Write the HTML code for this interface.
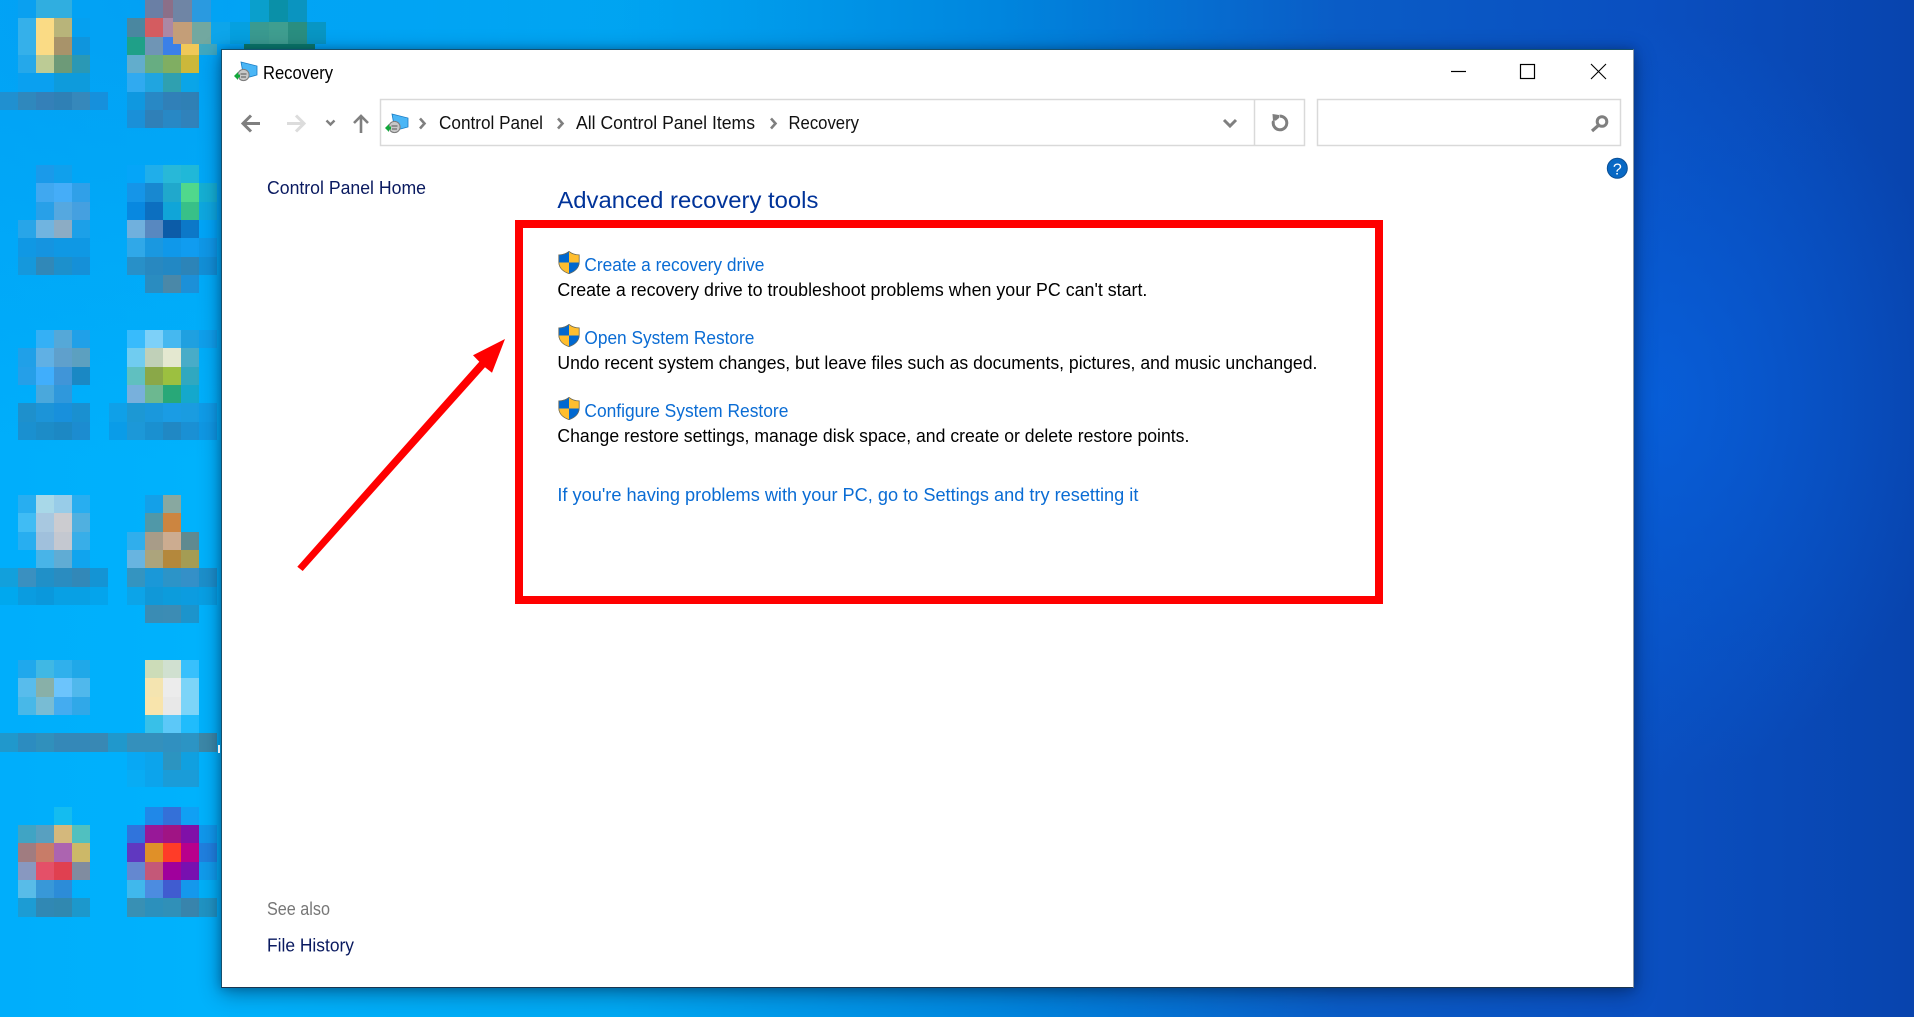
<!DOCTYPE html>
<html lang="en">
<head>
<meta charset="utf-8">
<title>Recovery</title>
<style>
html,body{margin:0;padding:0;width:1914px;height:1017px;overflow:hidden}
body{position:relative;background:
radial-gradient(ellipse 300px 380px at 1655px 400px,rgba(6,100,226,.7),rgba(6,96,216,0) 100%),
radial-gradient(ellipse 720px 460px at 150px 0,rgba(3,150,238,.6),rgba(3,150,238,0) 100%),
linear-gradient(90deg,#00aefb 0,#00b2fc 11%,#00a8f2 32%,#0086de 52%,#0a5cc6 70%,#0a4fc0 86%,#0844ae 100%)}
svg{position:absolute;left:0;top:0;display:block}
#win{position:absolute;left:221px;top:49px;width:1411px;height:937px;background:#fff;border:1px solid #14506e;border-bottom-color:#1a3550;border-right-color:#8a98a8;box-shadow:0 5px 20px rgba(0,20,50,.45),0 0 8px rgba(0,20,50,.25)}
text{font-family:"Liberation Sans",sans-serif;font-size:18px}
</style>
</head>
<body>
<svg width="1914" height="1017" viewBox="0 0 1914 1017" shape-rendering="crispEdges">
<!-- icon 1 -->
<rect x="18" y="0" width="18" height="18" fill="#0aa0f0"/><rect x="36" y="0" width="18" height="18" fill="#30aee0"/><rect x="54" y="0" width="18" height="18" fill="#30aee0"/>
<rect x="18" y="18" width="18" height="19" fill="#35b0ea"/><rect x="36" y="18" width="18" height="19" fill="#fadb85"/><rect x="54" y="18" width="18" height="19" fill="#b8b47a"/><rect x="72" y="18" width="18" height="19" fill="#05a0f0"/>
<rect x="18" y="37" width="18" height="18" fill="#35b0ea"/><rect x="36" y="37" width="18" height="18" fill="#fadb85"/><rect x="54" y="37" width="18" height="18" fill="#a8936a"/><rect x="72" y="37" width="18" height="18" fill="#0f95dd"/>
<rect x="18" y="55" width="18" height="18" fill="#25a8ea"/><rect x="36" y="55" width="18" height="18" fill="#bccb95"/><rect x="54" y="55" width="18" height="18" fill="#6d9a78"/><rect x="72" y="55" width="18" height="18" fill="#2a98b5"/>
<rect x="18" y="73" width="18" height="19" fill="#0aa0f0"/><rect x="36" y="73" width="18" height="19" fill="#0aa0f0"/><rect x="54" y="73" width="18" height="19" fill="#0e9bdc"/><rect x="72" y="73" width="18" height="19" fill="#0e9bdc"/>
<rect x="0" y="92" width="18" height="18" fill="#2090d0"/><rect x="18" y="92" width="18" height="18" fill="#2f88bd"/><rect x="36" y="92" width="18" height="18" fill="#3480b8"/><rect x="54" y="92" width="18" height="18" fill="#2f80b5"/><rect x="72" y="92" width="18" height="18" fill="#3688bb"/><rect x="90" y="92" width="18" height="18" fill="#1690dc"/>
<!-- top col B -->
<rect x="145" y="0" width="18" height="22" fill="#6a7fa5"/><rect x="163" y="0" width="10" height="22" fill="#8c6f88"/><rect x="173" y="0" width="19" height="22" fill="#6f85a5"/><rect x="192" y="0" width="19" height="22" fill="#2a9ae0"/><rect x="250" y="0" width="19" height="22" fill="#0a9fcc"/><rect x="269" y="0" width="19" height="22" fill="#0a90a8"/><rect x="288" y="0" width="19" height="22" fill="#0a94c0"/>
<rect x="127" y="18" width="18" height="19" fill="#4a87a0"/><rect x="145" y="18" width="18" height="19" fill="#d45c60"/><rect x="163" y="18" width="10" height="19" fill="#ab88a5"/>
<rect x="173" y="22" width="19" height="22" fill="#c49e78"/><rect x="192" y="22" width="19" height="22" fill="#72a8a0"/><rect x="211" y="22" width="19" height="22" fill="#0da5ea"/><rect x="230" y="22" width="20" height="22" fill="#05a0e0"/><rect x="250" y="22" width="19" height="22" fill="#3a9a90"/><rect x="269" y="22" width="19" height="22" fill="#3f9e90"/><rect x="288" y="22" width="19" height="22" fill="#2a8e80"/><rect x="307" y="22" width="19" height="22" fill="#0896c4"/>
<rect x="127" y="37" width="18" height="18" fill="#1fa088"/><rect x="145" y="37" width="18" height="18" fill="#6f95b5"/><rect x="163" y="37" width="10" height="18" fill="#3a80e8"/><rect x="173" y="44" width="8" height="11" fill="#3a80e8"/><rect x="181" y="44" width="18" height="11" fill="#f0c858"/><rect x="199" y="44" width="18" height="11" fill="#40a8c0"/>
<rect x="244" y="44" width="71" height="8" fill="#0a7a6a"/>
<rect x="127" y="55" width="18" height="18" fill="#62adcc"/><rect x="145" y="55" width="18" height="18" fill="#67ad82"/><rect x="163" y="55" width="18" height="18" fill="#80ae62"/><rect x="181" y="55" width="18" height="18" fill="#ccb83a"/>
<rect x="127" y="73" width="18" height="19" fill="#30aaf0"/><rect x="145" y="73" width="18" height="19" fill="#20a5e0"/><rect x="163" y="73" width="18" height="19" fill="#2fa0b0"/><rect x="181" y="73" width="18" height="19" fill="#0aa5e8"/>
<rect x="127" y="92" width="18" height="18" fill="#0f98e0"/><rect x="145" y="92" width="18" height="18" fill="#2888c5"/><rect x="163" y="92" width="18" height="18" fill="#3080b8"/><rect x="181" y="92" width="18" height="18" fill="#2f80b5"/>
<rect x="127" y="110" width="18" height="18" fill="#1a90d8"/><rect x="145" y="110" width="18" height="18" fill="#2f80b8"/><rect x="163" y="110" width="18" height="18" fill="#2888c5"/><rect x="181" y="110" width="18" height="18" fill="#3082bb"/>
<!-- icon 2 A -->
<rect x="36" y="165" width="18" height="18" fill="#1a9aea"/><rect x="54" y="165" width="18" height="18" fill="#10a0ec"/>
<rect x="36" y="183" width="18" height="19" fill="#40a8f0"/><rect x="54" y="183" width="18" height="19" fill="#45adf8"/><rect x="72" y="183" width="18" height="19" fill="#30a0e8"/>
<rect x="36" y="202" width="18" height="18" fill="#28a0e8"/><rect x="54" y="202" width="18" height="18" fill="#55a8e0"/><rect x="72" y="202" width="18" height="18" fill="#45a0e0"/>
<rect x="18" y="220" width="18" height="18" fill="#28a5e8"/><rect x="36" y="220" width="18" height="18" fill="#70b4e0"/><rect x="54" y="220" width="18" height="18" fill="#8cacc4"/><rect x="72" y="220" width="18" height="18" fill="#1ca0e8"/>
<rect x="18" y="238" width="18" height="19" fill="#1098e4"/><rect x="36" y="238" width="18" height="19" fill="#1594e0"/><rect x="54" y="238" width="18" height="19" fill="#0f98e4"/><rect x="72" y="238" width="18" height="19" fill="#0f98e4"/>
<rect x="18" y="257" width="18" height="18" fill="#1598dc"/><rect x="36" y="257" width="18" height="18" fill="#3088b8"/><rect x="54" y="257" width="18" height="18" fill="#1c90cc"/><rect x="72" y="257" width="18" height="18" fill="#1590d8"/>
<!-- icon 2 B -->
<rect x="127" y="165" width="18" height="18" fill="#05a5f8"/><rect x="145" y="165" width="18" height="18" fill="#20aeea"/><rect x="163" y="165" width="18" height="18" fill="#28b8d8"/><rect x="181" y="165" width="18" height="18" fill="#20b8d8"/>
<rect x="127" y="183" width="18" height="19" fill="#1595e8"/><rect x="145" y="183" width="18" height="19" fill="#1888d0"/><rect x="163" y="183" width="18" height="19" fill="#20a8cc"/><rect x="181" y="183" width="18" height="19" fill="#50d88c"/><rect x="199" y="183" width="18" height="19" fill="#15b0d4"/>
<rect x="127" y="202" width="18" height="18" fill="#0888e0"/><rect x="145" y="202" width="18" height="18" fill="#0c6fc0"/><rect x="163" y="202" width="18" height="18" fill="#10a5d8"/><rect x="181" y="202" width="18" height="18" fill="#38c088"/><rect x="199" y="202" width="18" height="18" fill="#0ea8e0"/>
<rect x="127" y="220" width="18" height="18" fill="#70b0dd"/><rect x="145" y="220" width="18" height="18" fill="#5888c0"/><rect x="163" y="220" width="18" height="18" fill="#0c5ca8"/><rect x="181" y="220" width="18" height="18" fill="#0c78c8"/><rect x="199" y="220" width="18" height="18" fill="#00a5f8"/>
<rect x="127" y="238" width="18" height="19" fill="#30a8e8"/><rect x="145" y="238" width="18" height="19" fill="#1a98e0"/><rect x="163" y="238" width="18" height="19" fill="#0f98ea"/><rect x="181" y="238" width="18" height="19" fill="#109cf0"/><rect x="199" y="238" width="18" height="19" fill="#0f98e8"/>
<rect x="127" y="257" width="18" height="18" fill="#2890c8"/><rect x="145" y="257" width="18" height="18" fill="#2888c0"/><rect x="163" y="257" width="18" height="18" fill="#2288c4"/><rect x="181" y="257" width="18" height="18" fill="#2c84b8"/><rect x="199" y="257" width="18" height="18" fill="#1290d8"/>
<rect x="145" y="275" width="18" height="18" fill="#2a8cc0"/><rect x="163" y="275" width="18" height="18" fill="#4a88a8"/><rect x="181" y="275" width="18" height="18" fill="#1c90d8"/>
<!-- icon 3 A -->
<rect x="36" y="330" width="18" height="18" fill="#35b0f5"/><rect x="54" y="330" width="18" height="18" fill="#55a8d8"/><rect x="72" y="330" width="18" height="18" fill="#20a0e8"/>
<rect x="18" y="348" width="18" height="19" fill="#20a0e8"/><rect x="36" y="348" width="18" height="19" fill="#60b0e4"/><rect x="54" y="348" width="18" height="19" fill="#5fa0cc"/><rect x="72" y="348" width="18" height="19" fill="#5ca0c0"/>
<rect x="18" y="367" width="18" height="18" fill="#259fe8"/><rect x="36" y="367" width="18" height="18" fill="#40aefc"/><rect x="54" y="367" width="18" height="18" fill="#4095d8"/><rect x="72" y="367" width="18" height="18" fill="#1a88c4"/>
<rect x="36" y="385" width="18" height="18" fill="#4aa8dc"/><rect x="54" y="385" width="18" height="18" fill="#2f98dc"/>
<rect x="18" y="403" width="18" height="19" fill="#1e90cc"/><rect x="36" y="403" width="18" height="19" fill="#1c94d8"/><rect x="54" y="403" width="18" height="19" fill="#1890dc"/><rect x="72" y="403" width="18" height="19" fill="#1a90d0"/>
<rect x="18" y="422" width="18" height="18" fill="#1a90d0"/><rect x="36" y="422" width="18" height="18" fill="#1c8cc8"/><rect x="54" y="422" width="18" height="18" fill="#1c88c4"/><rect x="72" y="422" width="18" height="18" fill="#1c8cd0"/>
<!-- icon 3 B -->
<rect x="127" y="330" width="18" height="18" fill="#38bbfc"/><rect x="145" y="330" width="18" height="18" fill="#7dd0f8"/><rect x="163" y="330" width="18" height="18" fill="#45b8f0"/><rect x="181" y="330" width="18" height="18" fill="#1fa0e0"/><rect x="199" y="330" width="18" height="18" fill="#0fa0ec"/>
<rect x="127" y="348" width="18" height="19" fill="#70ccf0"/><rect x="145" y="348" width="18" height="19" fill="#c0d0b8"/><rect x="163" y="348" width="18" height="19" fill="#e4e8d0"/><rect x="181" y="348" width="18" height="19" fill="#48acc8"/>
<rect x="127" y="367" width="18" height="18" fill="#60c0c0"/><rect x="145" y="367" width="18" height="18" fill="#8aa848"/><rect x="163" y="367" width="18" height="18" fill="#9cc040"/><rect x="181" y="367" width="18" height="18" fill="#30a8c0"/>
<rect x="127" y="385" width="18" height="18" fill="#78b0dc"/><rect x="145" y="385" width="18" height="18" fill="#6cb890"/><rect x="163" y="385" width="18" height="18" fill="#28a878"/><rect x="181" y="385" width="18" height="18" fill="#14a8cc"/>
<rect x="109" y="403" width="18" height="19" fill="#0fa0e8"/><rect x="127" y="403" width="18" height="19" fill="#1c98d4"/><rect x="145" y="403" width="18" height="19" fill="#1a98dc"/><rect x="163" y="403" width="18" height="19" fill="#1a9ce4"/><rect x="181" y="403" width="18" height="19" fill="#1a9ce0"/><rect x="199" y="403" width="18" height="19" fill="#0f9ce8"/>
<rect x="109" y="422" width="18" height="18" fill="#0a9ce8"/><rect x="127" y="422" width="18" height="18" fill="#1c98d8"/><rect x="145" y="422" width="18" height="18" fill="#1a90d0"/><rect x="163" y="422" width="18" height="18" fill="#2088c4"/><rect x="181" y="422" width="18" height="18" fill="#1a90d4"/><rect x="199" y="422" width="18" height="18" fill="#0f98e4"/>
<!-- icon 4 A -->
<rect x="18" y="495" width="18" height="18" fill="#28aef0"/><rect x="36" y="495" width="18" height="18" fill="#a8d8e8"/><rect x="54" y="495" width="18" height="18" fill="#98cce8"/><rect x="72" y="495" width="18" height="18" fill="#28aef0"/>
<rect x="18" y="513" width="18" height="19" fill="#40bcf4"/><rect x="36" y="513" width="18" height="19" fill="#a8c8e0"/><rect x="54" y="513" width="18" height="19" fill="#ccccd0"/><rect x="72" y="513" width="18" height="19" fill="#50b0e0"/>
<rect x="18" y="532" width="18" height="18" fill="#28aef0"/><rect x="36" y="532" width="18" height="18" fill="#a0c0dc"/><rect x="54" y="532" width="18" height="18" fill="#c4c8d0"/><rect x="72" y="532" width="18" height="18" fill="#38aee8"/>
<rect x="36" y="550" width="18" height="18" fill="#48b4e8"/><rect x="54" y="550" width="18" height="18" fill="#60acd4"/><rect x="72" y="550" width="18" height="18" fill="#10a4ee"/>
<rect x="0" y="568" width="18" height="19" fill="#12a0dc"/><rect x="18" y="568" width="18" height="19" fill="#3a90c0"/><rect x="36" y="568" width="18" height="19" fill="#2090c8"/><rect x="54" y="568" width="18" height="19" fill="#2a8cc0"/><rect x="72" y="568" width="18" height="19" fill="#3288b8"/><rect x="90" y="568" width="18" height="19" fill="#1494d4"/>
<rect x="0" y="587" width="18" height="18" fill="#00a8ee"/><rect x="18" y="587" width="18" height="18" fill="#0a9ce0"/><rect x="36" y="587" width="18" height="18" fill="#0a98dc"/><rect x="54" y="587" width="18" height="18" fill="#08a0e4"/><rect x="72" y="587" width="18" height="18" fill="#08a0e4"/><rect x="90" y="587" width="18" height="18" fill="#04a4ec"/>
<!-- icon 4 B -->
<rect x="145" y="495" width="18" height="18" fill="#14a0e8"/><rect x="163" y="495" width="18" height="18" fill="#88a8a0"/>
<rect x="145" y="513" width="18" height="19" fill="#5098a8"/><rect x="163" y="513" width="18" height="19" fill="#cc8540"/>
<rect x="127" y="532" width="18" height="18" fill="#30aeec"/><rect x="145" y="532" width="18" height="18" fill="#a89c88"/><rect x="163" y="532" width="18" height="18" fill="#ccac90"/><rect x="181" y="532" width="18" height="18" fill="#5f8a90"/>
<rect x="127" y="550" width="18" height="18" fill="#68b4e0"/><rect x="145" y="550" width="18" height="18" fill="#aca47c"/><rect x="163" y="550" width="18" height="18" fill="#b4883c"/><rect x="181" y="550" width="18" height="18" fill="#a49c54"/>
<rect x="127" y="568" width="18" height="19" fill="#3494c0"/><rect x="145" y="568" width="18" height="19" fill="#1a98d8"/><rect x="163" y="568" width="18" height="19" fill="#2c94c8"/><rect x="181" y="568" width="18" height="19" fill="#3490c8"/><rect x="199" y="568" width="18" height="19" fill="#1c90cc"/>
<rect x="127" y="587" width="18" height="18" fill="#0ca4e8"/><rect x="145" y="587" width="18" height="18" fill="#1098d8"/><rect x="163" y="587" width="18" height="18" fill="#0c9cdc"/><rect x="181" y="587" width="18" height="18" fill="#0c9ce0"/><rect x="199" y="587" width="18" height="18" fill="#08a0e4"/>
<rect x="145" y="605" width="18" height="18" fill="#3a8cb4"/><rect x="163" y="605" width="18" height="18" fill="#3c8cb4"/><rect x="181" y="605" width="18" height="18" fill="#1c94cc"/>
<!-- icon 5 -->
<rect x="18" y="660" width="18" height="18" fill="#20a8ec"/><rect x="36" y="660" width="18" height="18" fill="#40b8e4"/><rect x="54" y="660" width="18" height="18" fill="#30b0ec"/><rect x="72" y="660" width="18" height="18" fill="#20a8e8"/>
<rect x="18" y="678" width="18" height="19" fill="#58bcec"/><rect x="36" y="678" width="18" height="19" fill="#88b0a8"/><rect x="54" y="678" width="18" height="19" fill="#6cc4fc"/><rect x="72" y="678" width="18" height="19" fill="#50b8ec"/>
<rect x="18" y="697" width="18" height="18" fill="#48b8e8"/><rect x="36" y="697" width="18" height="18" fill="#78bcd4"/><rect x="54" y="697" width="18" height="18" fill="#44acf0"/><rect x="72" y="697" width="18" height="18" fill="#30a8e8"/>
<rect x="0" y="733" width="18" height="19" fill="#2098cc"/><rect x="18" y="733" width="18" height="19" fill="#2c8cc0"/><rect x="36" y="733" width="18" height="19" fill="#3090bc"/><rect x="54" y="733" width="18" height="19" fill="#3488b8"/><rect x="72" y="733" width="18" height="19" fill="#3488b8"/><rect x="90" y="733" width="18" height="19" fill="#3888b4"/><rect x="108" y="733" width="19" height="19" fill="#2098cc"/><rect x="127" y="733" width="18" height="19" fill="#3490bc"/><rect x="145" y="733" width="18" height="19" fill="#3490bc"/><rect x="163" y="733" width="18" height="19" fill="#3090c0"/><rect x="181" y="733" width="18" height="19" fill="#2c94c4"/><rect x="199" y="733" width="18" height="19" fill="#3c88a8"/>
<rect x="145" y="660" width="18" height="18" fill="#ccdcb8"/><rect x="163" y="660" width="18" height="18" fill="#d0e0d0"/><rect x="181" y="660" width="18" height="18" fill="#38c0fc"/>
<rect x="145" y="678" width="18" height="19" fill="#f4e4b0"/><rect x="163" y="678" width="18" height="19" fill="#ececec"/><rect x="181" y="678" width="18" height="19" fill="#7cd4f8"/>
<rect x="145" y="697" width="18" height="18" fill="#f8e4ac"/><rect x="163" y="697" width="18" height="18" fill="#e8e8e8"/><rect x="181" y="697" width="18" height="18" fill="#7cd4f8"/>
<rect x="145" y="715" width="18" height="18" fill="#38c0e8"/><rect x="163" y="715" width="18" height="18" fill="#5cc8f8"/><rect x="181" y="715" width="18" height="18" fill="#20bcfc"/>
<rect x="127" y="752" width="18" height="18" fill="#08a8f4"/><rect x="145" y="752" width="18" height="18" fill="#0ca4ec"/><rect x="163" y="752" width="18" height="18" fill="#2c94c0"/><rect x="181" y="752" width="18" height="18" fill="#10a0e0"/>
<rect x="127" y="770" width="18" height="17" fill="#08acf4"/><rect x="145" y="770" width="18" height="17" fill="#0ca4ec"/><rect x="163" y="770" width="18" height="17" fill="#1a9cd8"/><rect x="181" y="770" width="18" height="17" fill="#1a9cd8"/>
<!-- icon 6 A -->
<rect x="54" y="807" width="18" height="18" fill="#14bcf0"/>
<rect x="18" y="825" width="18" height="18" fill="#40a4c4"/><rect x="36" y="825" width="18" height="18" fill="#58a0c0"/><rect x="54" y="825" width="18" height="18" fill="#d4b87c"/><rect x="72" y="825" width="18" height="18" fill="#50c0c0"/>
<rect x="18" y="843" width="18" height="19" fill="#a07c80"/><rect x="36" y="843" width="18" height="19" fill="#c87c68"/><rect x="54" y="843" width="18" height="19" fill="#ac64b0"/><rect x="72" y="843" width="18" height="19" fill="#ccb868"/>
<rect x="18" y="862" width="18" height="18" fill="#8898c0"/><rect x="36" y="862" width="18" height="18" fill="#e45068"/><rect x="54" y="862" width="18" height="18" fill="#e04050"/><rect x="72" y="862" width="18" height="18" fill="#808ca0"/>
<rect x="18" y="880" width="18" height="18" fill="#58bce8"/><rect x="36" y="880" width="18" height="18" fill="#3898d8"/><rect x="54" y="880" width="18" height="18" fill="#2c8cd8"/>
<rect x="18" y="898" width="18" height="19" fill="#1c9cd4"/><rect x="36" y="898" width="18" height="19" fill="#3088b4"/><rect x="54" y="898" width="18" height="19" fill="#3088b0"/><rect x="72" y="898" width="18" height="19" fill="#1c98cc"/>
<!-- icon 6 B -->
<rect x="145" y="807" width="18" height="18" fill="#2088e8"/><rect x="163" y="807" width="18" height="18" fill="#3470d8"/><rect x="181" y="807" width="18" height="18" fill="#10a0f4"/>
<rect x="127" y="825" width="18" height="18" fill="#3074dc"/><rect x="145" y="825" width="18" height="18" fill="#981898"/><rect x="163" y="825" width="18" height="18" fill="#a01484"/><rect x="181" y="825" width="18" height="18" fill="#8010a8"/><rect x="199" y="825" width="18" height="18" fill="#1098ec"/>
<rect x="127" y="843" width="18" height="19" fill="#6038c0"/><rect x="145" y="843" width="18" height="19" fill="#e09028"/><rect x="163" y="843" width="18" height="19" fill="#ff3c28"/><rect x="181" y="843" width="18" height="19" fill="#b8008c"/><rect x="199" y="843" width="18" height="19" fill="#2080e0"/>
<rect x="127" y="862" width="18" height="18" fill="#6488d0"/><rect x="145" y="862" width="18" height="18" fill="#c45878"/><rect x="163" y="862" width="18" height="18" fill="#a0009c"/><rect x="181" y="862" width="18" height="18" fill="#7810b0"/><rect x="199" y="862" width="18" height="18" fill="#109cec"/>
<rect x="127" y="880" width="18" height="18" fill="#40b8ec"/><rect x="145" y="880" width="18" height="18" fill="#4c8ce0"/><rect x="163" y="880" width="18" height="18" fill="#405cd0"/><rect x="181" y="880" width="18" height="18" fill="#1498ec"/><rect x="199" y="880" width="18" height="18" fill="#00b0f8"/>
<rect x="127" y="898" width="18" height="19" fill="#3890b4"/><rect x="145" y="898" width="18" height="19" fill="#2c90bc"/><rect x="163" y="898" width="18" height="19" fill="#3090b8"/><rect x="181" y="898" width="18" height="19" fill="#3884ac"/><rect x="199" y="898" width="18" height="19" fill="#2094c4"/>
</svg>
<div id="win"></div>
<svg width="1914" height="1017" viewBox="0 0 1914 1017">
<defs>
<clipPath id="sc"><path d="M11 0C8 2.5 4 3.6 .5 3.6V11C.5 17 5 21 11 23 17 21 21.5 17 21.5 11V3.6C18 3.6 14 2.5 11 0Z"/></clipPath>
<g id="shield">
<g clip-path="url(#sc)"><rect x="0" y="0" width="11" height="11.5" fill="#0068d0"/><rect x="11" y="0" width="11" height="11.5" fill="#ffbe2e"/><rect x="0" y="11.5" width="11" height="11.5" fill="#ffbe2e"/><rect x="11" y="11.5" width="11" height="11.5" fill="#0068d0"/></g>
<path d="M11 .4C8 2.8 4 3.9 .8 3.9V11C.8 16.8 5.2 20.7 11 22.6 16.8 20.7 21.2 16.8 21.2 11V3.9C18 3.9 14 2.8 11 .4Z" fill="none" stroke="#6b6b5c" stroke-width=".8"/>
</g>
<g id="rec">
<path d="M241 62 257 66V75L244 78.5Z" fill="#4ab6f6" stroke="#1a7cc4" stroke-width=".8"/>
<circle cx="243.5" cy="75" r="5.6" fill="#c8c8c8" stroke="#7c7c7c" stroke-width="1"/>
<path d="M240.5 74h6M241 77h5" stroke="#555" stroke-width="1"/>
<path d="M234 76 238 72V74.5H240V77.5H238V80Z" fill="#12a83a"/>
</g>
</defs>

<!-- stray glyph at window edge -->
<rect x="218" y="745" width="2" height="8" fill="#e8eef4"/>

<!-- title bar -->
<use href="#rec"/>
<text x="263" y="79" textLength="70" lengthAdjust="spacingAndGlyphs" fill="#000">Recovery</text>
<path d="M1451 71.5H1466" stroke="#000" stroke-width="1.2"/>
<rect x="1520.5" y="64.5" width="14" height="14" fill="none" stroke="#000" stroke-width="1.2"/>
<path d="M1591 64 1606 79M1606 64 1591 79" stroke="#000" stroke-width="1.1"/>

<!-- nav -->
<path d="M260 123.5H243M251 115.5 243 123.5 251 131.5" fill="none" stroke="#7f7f7f" stroke-width="3"/>
<path d="M287 123.5H304M296 115.5 304 123.5 296 131.5" fill="none" stroke="#dcdcdc" stroke-width="3"/>
<path d="M326.5 120.5 330.5 124.5 334.5 120.5" fill="none" stroke="#7f7f7f" stroke-width="2.4"/>
<path d="M361 133V116M354 123 361 116 368 123" fill="none" stroke="#7f7f7f" stroke-width="2.6"/>

<!-- address -->
<rect x="380.5" y="99.5" width="924" height="46" fill="#fff" stroke="#d9d9d9" stroke-width="1.5"/>
<path d="M1254.5 100V145" stroke="#d9d9d9" stroke-width="1.5"/>
<use href="#rec" transform="translate(151 52)"/>
<path d="M420 118.5 424.5 123.5 420 128.5M558 118.5 562.5 123.5 558 128.5M771 118.5 775.5 123.5 771 128.5" fill="none" stroke="#7f7f7f" stroke-width="2.6"/>
<text x="439" y="129" textLength="104" lengthAdjust="spacingAndGlyphs" fill="#111">Control Panel</text>
<text x="576" y="129" textLength="179" lengthAdjust="spacingAndGlyphs" fill="#111">All Control Panel Items</text>
<text x="788.5" y="129" textLength="70.5" lengthAdjust="spacingAndGlyphs" fill="#111">Recovery</text>
<path d="M1224 120 1230 126 1236 120" fill="none" stroke="#7f7f7f" stroke-width="3"/>
<path d="M1279.5 116.2A6.8 6.8 0 1 1 1273.5 121" fill="none" stroke="#7f7f7f" stroke-width="3"/>
<polygon points="1272.5,114 1279,115 1279,118 1276,120.5 1273,121" fill="#7f7f7f"/>

<!-- search -->
<rect x="1317.5" y="99.5" width="303" height="46" fill="#fff" stroke="#d9d9d9" stroke-width="1.5"/>
<circle cx="1602" cy="121.5" r="4.8" fill="none" stroke="#7f7f7f" stroke-width="3"/>
<path d="M1598.3 125.5 1592 131" fill="none" stroke="#7f7f7f" stroke-width="3.2"/>

<!-- help -->
<circle cx="1617.3" cy="168.3" r="10" fill="#0868c4" stroke="#0a4f96" stroke-width="1"/>
<text x="1617.3" y="174.5" text-anchor="middle" style="font-size:16px" fill="#fff">?</text>

<!-- left pane -->
<text x="267" y="194" textLength="159" lengthAdjust="spacingAndGlyphs" fill="#0a1a60">Control Panel Home</text>
<text x="267" y="915" textLength="63" lengthAdjust="spacingAndGlyphs" fill="#777">See also</text>
<text x="267" y="951.5" textLength="87" lengthAdjust="spacingAndGlyphs" fill="#0a1a60">File History</text>

<!-- main -->
<text x="557.4" y="208" textLength="261" lengthAdjust="spacingAndGlyphs" style="font-size:23.5px" fill="#003399">Advanced recovery tools</text>

<use href="#shield" transform="translate(558 251)"/>
<text x="584.4" y="271" textLength="180" lengthAdjust="spacingAndGlyphs" fill="#0a6cd4">Create a recovery drive</text>
<text x="557.4" y="296" textLength="590" lengthAdjust="spacingAndGlyphs" fill="#000">Create a recovery drive to troubleshoot problems when your PC can't start.</text>

<use href="#shield" transform="translate(558 324)"/>
<text x="584.4" y="344" textLength="170" lengthAdjust="spacingAndGlyphs" fill="#0a6cd4">Open System Restore</text>
<text x="557.4" y="369" textLength="760" lengthAdjust="spacingAndGlyphs" fill="#000">Undo recent system changes, but leave files such as documents, pictures, and music unchanged.</text>

<use href="#shield" transform="translate(558 397)"/>
<text x="584.4" y="417" textLength="204" lengthAdjust="spacingAndGlyphs" fill="#0a6cd4">Configure System Restore</text>
<text x="557.4" y="442" textLength="632" lengthAdjust="spacingAndGlyphs" fill="#000">Change restore settings, manage disk space, and create or delete restore points.</text>

<text x="557.4" y="501" textLength="581" lengthAdjust="spacingAndGlyphs" fill="#0a6cd4">If you're having problems with your PC, go to Settings and try resetting it</text>

<!-- annotations -->
<rect x="519" y="224" width="860" height="376" fill="none" stroke="#ff0000" stroke-width="8"/>
<polygon points="505,339 492,372.7 485,367.3 302.7,571 297.3,566.7 479.3,361.7 473,355.3" fill="#ff0000"/>
</svg>
</body>
</html>
